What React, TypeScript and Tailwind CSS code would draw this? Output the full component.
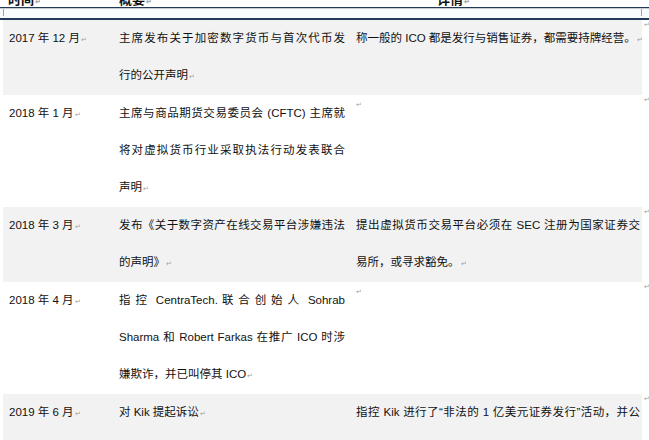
type Row = {
  date: string;
  summary: string[];
  detail: string[];
  shaded: boolean;
  tall?: boolean;
};

const rows: Row[] = [
  {
    date: "2017 年 12 月",
    summary: ["主席发布关于加密数字货币与首次代币发", "行的公开声明"],
    detail: ["称一般的 ICO 都是发行与销售证券，都需要持牌经营。"],
    shaded: true,
  },
  {
    date: "2018 年 1 月",
    summary: [
      "主席与商品期货交易委员会 (CFTC) 主席就",
      "将对虚拟货币行业采取执法行动发表联合",
      "声明",
    ],
    detail: [],
    shaded: false,
  },
  {
    date: "2018 年 3 月",
    summary: ["发布《关于数字资产在线交易平台涉嫌违法", "的声明》"],
    detail: ["提出虚拟货币交易平台必须在 SEC 注册为国家证券交", "易所，或寻求豁免。"],
    shaded: true,
  },
  {
    date: "2018 年 4 月",
    summary: [
      "指 控  CentraTech. 联 合 创 始 人  Sohrab",
      "Sharma 和 Robert Farkas 在推广 ICO 时涉",
      "嫌欺诈，并已叫停其 ICO",
    ],
    detail: [],
    shaded: false,
  },
  {
    date: "2019 年 6 月",
    summary: ["对 Kik 提起诉讼"],
    detail: ["指控 Kik 进行了“非法的 1 亿美元证券发行”活动，并公"],
    shaded: true,
    tall: true,
  },
];

function Mark() {
  return <span className="ml-[1px] align-baseline text-[7px] text-[#a0a0a0]">↵</span>;
}

// every line but the last is stretched to the cell width, like Word's justified text
function Lines({ lines, open }: { lines: string[]; open?: boolean }) {
  if (lines.length === 0) {
    return (
      <div className="-mt-[10px] leading-[37px]">
        <span className="text-[7px] text-[#a0a0a0]">↵</span>
      </div>
    );
  }
  return (
    <>
      {lines.map((line, i) => {
        const last = i === lines.length - 1;
        if (last && !open) {
          return (
            <div key={i} className="whitespace-pre">
              {line}
              <Mark />
            </div>
          );
        }
        return (
          <div key={i} className="whitespace-pre text-justify [text-align-last:justify]">
            {line}
          </div>
        );
      })}
    </>
  );
}

export default function App() {
  return (
    <div
      lang="zh-CN"
      className="h-[440px] w-[649px] overflow-hidden bg-white text-[11.5px] text-[#111]"
      style={{ fontFamily: '"Liberation Sans", "Noto Sans CJK SC", sans-serif' }}
    >
      {/* header row, mostly scrolled off the top */}
      <div className="h-[7px] overflow-hidden">
        <div className="-mt-[7px] flex text-[13px] font-bold leading-[13px]">
          <div className="w-[119px] pl-[8px]">
            时间<Mark />
          </div>
          <div className="w-[318px]">
            概要<Mark />
          </div>
          <div>
            详情<Mark />
          </div>
        </div>
      </div>
      <div className="border-t border-[#23395a]" />
      <div className="flex h-[10px] border-t border-[#c5ccd4] bg-[#f7fbfe]">
        <div className="ml-[3px] h-[7px] border-l border-[#9aa4ae]" />
        <div className="flex-1" />
        <div className="mr-[7px] h-[7px] border-r border-[#9aa4ae]" />
      </div>
      <div className="border-t-2 border-[#23395a]" />

      <div className="pl-[3px]">
        {rows.map((row, i) => (
          <div key={i} className="flex">
            <div
              className={`flex w-[639px] leading-[37px] ${row.shaded ? "bg-[#f2f2f2]" : "bg-white"} ${
                row.tall ? "min-h-[74px]" : ""
              }`}
            >
              <div className="w-[116px] pl-[6px]">
                {row.date}
                <Mark />
              </div>
              <div className="w-[237px] pr-[11px]">
                <Lines lines={row.summary} />
              </div>
              <div className="w-[286px] pr-[2px]">
                <Lines lines={row.detail} open={row.tall} />
              </div>
            </div>
            <div className="pl-[2px] text-[7px] leading-[10px] text-[#a0a0a0]">↵</div>
          </div>
        ))}
      </div>
    </div>
  );
}
